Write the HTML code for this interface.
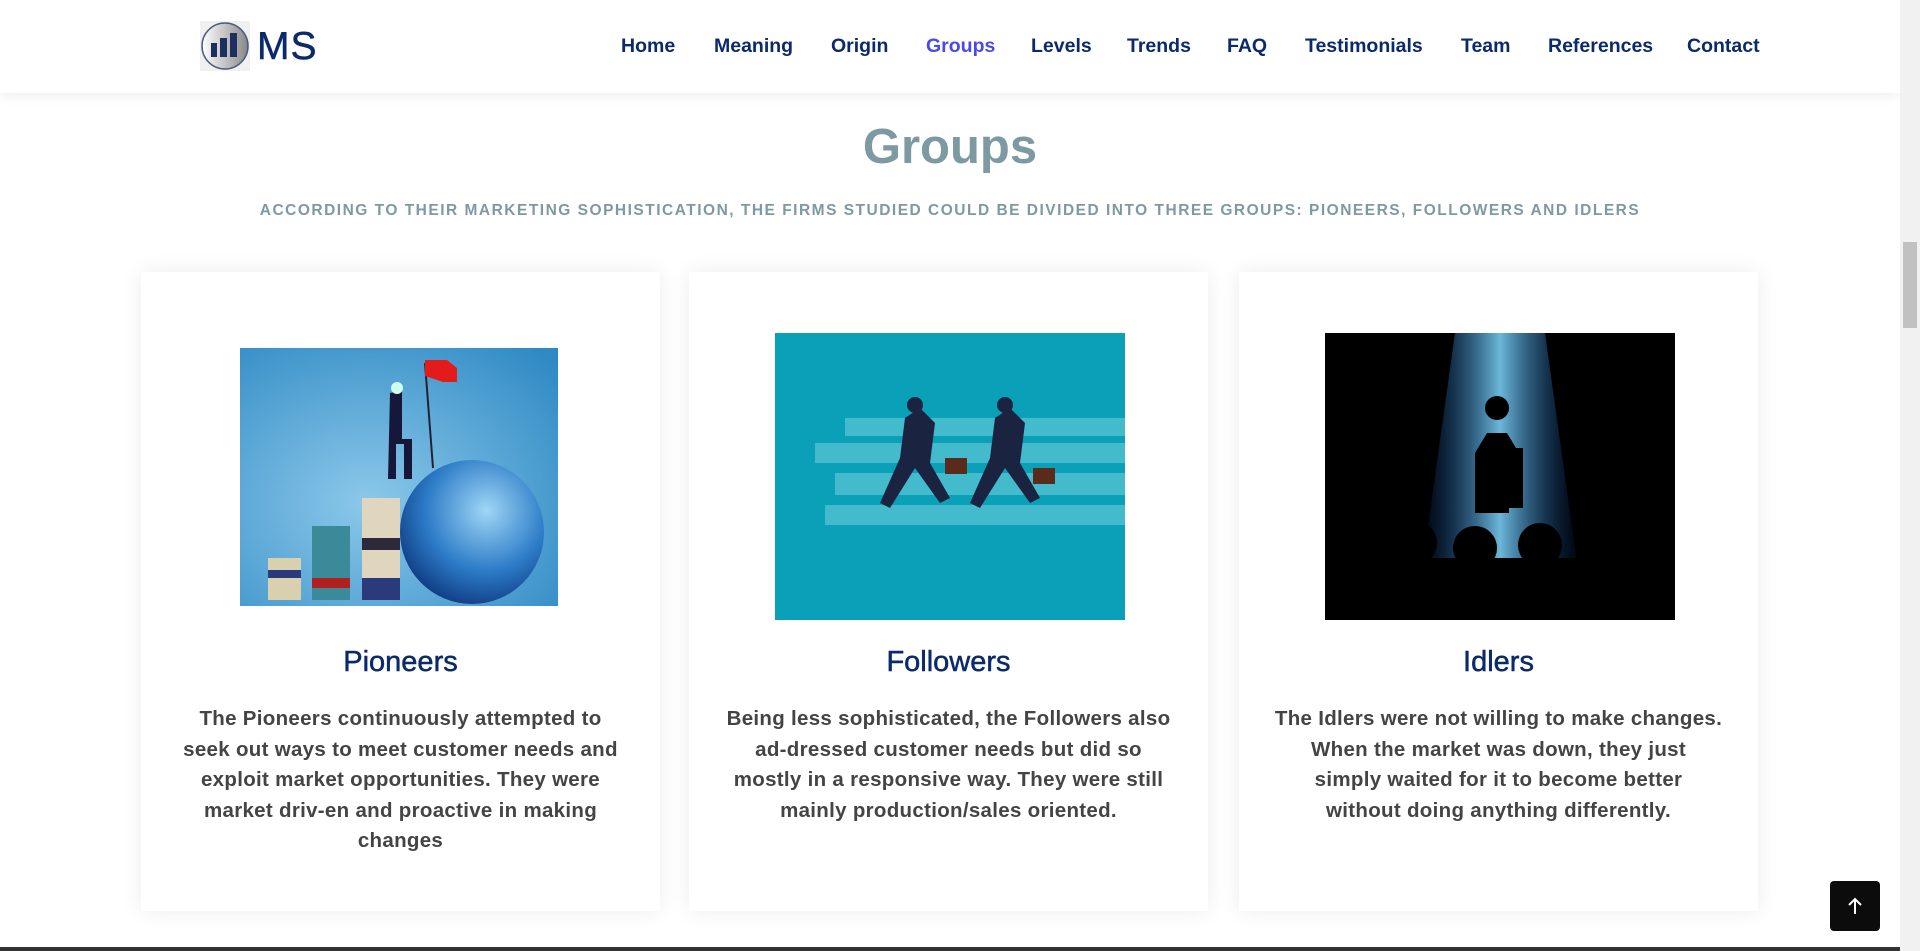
<!DOCTYPE html>
<html><head><meta charset="utf-8">
<style>
*{margin:0;padding:0;box-sizing:border-box}
body{width:1920px;height:951px;overflow:hidden;background:#fff;font-family:"Liberation Sans",sans-serif;position:relative}
.hdr{position:absolute;left:0;top:0;width:1900px;height:93px;background:#fff;box-shadow:0 2px 12px rgba(0,0,0,.08);z-index:2}
.logo{position:absolute;left:200px;top:21px;width:50px;height:50px;background:#f0f0f0}
.ms{position:absolute;left:257px;top:25px;font-size:39px;color:#0b2a6b;letter-spacing:1px;-webkit-text-stroke:.5px #0b2a6b}
.nav{position:absolute;top:35px;font-size:19.5px;color:#0b2a6b;font-weight:bold}
.scroll{position:absolute;right:0;top:0;width:20px;height:951px;background:#f1f1f1;z-index:3}
.thumb{position:absolute;left:3px;top:242px;width:14px;height:86px;background:#c1c1c1}
h1{position:absolute;left:0;width:1900px;top:119px;text-align:center;font-size:49px;color:#7d99a2;font-weight:bold}
.sub{position:absolute;left:0;width:1900px;top:202px;text-align:center;font-size:15.5px;color:#7d99a2;letter-spacing:1.5px;font-weight:bold}
.card{position:absolute;top:272px;width:519px;height:639px;background:#fff;box-shadow:0 0 20px rgba(0,0,0,.08)}
.card svg{position:absolute}
.ct{position:absolute;left:0;width:100%;top:374px;text-align:center;font-size:29px;color:#0b2a6b;-webkit-text-stroke:.5px #0b2a6b}
.cb{position:absolute;left:0;width:100%;top:432px;text-align:center;font-size:20.5px;letter-spacing:.3px;line-height:30.5px;color:#444;font-weight:bold}
.up{position:absolute;left:1830px;top:881px;width:50px;height:50px;background:#0c0c0c;border-radius:4px;z-index:4}
</style></head><body>
<div class="hdr">
 <div class="logo"><svg width="50" height="50"><defs><linearGradient id="lg" x1="0" x2="1"><stop offset="0" stop-color="#fff"/><stop offset="1" stop-color="#888"/></linearGradient></defs><circle cx="25" cy="25" r="23" fill="url(#lg)" stroke="#4a5a80" stroke-width="1.5"/><rect x="11" y="22" width="6" height="14" fill="#1e2e5e"/><rect x="20" y="17" width="7" height="19" fill="#1e2e5e"/><rect x="30" y="12" width="7" height="24" fill="#1e2e5e"/></svg></div>
 <div class="ms">MS</div>
 <span class="nav" style="left:621px">Home</span>
 <span class="nav" style="left:714px">Meaning</span>
 <span class="nav" style="left:831px">Origin</span>
 <span class="nav" style="left:926px;color:#4a4ae8">Groups</span>
 <span class="nav" style="left:1031px">Levels</span>
 <span class="nav" style="left:1127px">Trends</span>
 <span class="nav" style="left:1227px">FAQ</span>
 <span class="nav" style="left:1305px">Testimonials</span>
 <span class="nav" style="left:1461px">Team</span>
 <span class="nav" style="left:1548px">References</span>
 <span class="nav" style="left:1687px">Contact</span>
</div>
<div class="scroll"><div class="thumb"></div></div>
<h1>Groups</h1>
<div class="sub">ACCORDING TO THEIR MARKETING SOPHISTICATION, THE FIRMS STUDIED COULD BE DIVIDED INTO THREE GROUPS: PIONEERS, FOLLOWERS AND IDLERS</div>

<div class="card" style="left:141px">
 <svg style="left:99px;top:76px" width="318" height="258"><defs><radialGradient id="b1" cx=".4" cy=".6" r=".8"><stop offset="0" stop-color="#8cc8ea"/><stop offset="1" stop-color="#2f8ac4"/></radialGradient><radialGradient id="g1" cx=".6" cy=".35" r=".7"><stop offset="0" stop-color="#9fd6f5"/><stop offset=".6" stop-color="#2d7cc8"/><stop offset="1" stop-color="#0f3a80"/></radialGradient></defs><rect width="318" height="258" fill="url(#b1)"/><circle cx="232" cy="184" r="72" fill="url(#g1)"/><rect x="28" y="210" width="33" height="42" fill="#d9d0b0"/><rect x="28" y="222" width="33" height="8" fill="#2a3a7a"/><rect x="72" y="178" width="38" height="74" fill="#3b8a9a"/><rect x="72" y="230" width="38" height="10" fill="#b02020"/><rect x="122" y="150" width="38" height="102" fill="#e0d6c0"/><rect x="122" y="190" width="38" height="12" fill="#2a2a3a"/><rect x="122" y="230" width="38" height="22" fill="#2a3a7a"/><path d="M150 45 l12-2 v48 l10 0 v40 h-8 v-35 h-8 v35 h-8 z" fill="#15183a"/><circle cx="157" cy="40" r="6" fill="#cfe"/><line x1="185" y1="15" x2="193" y2="120" stroke="#223" stroke-width="2"/><path d="M185 12 h22 l10 8 v14 h-14 l-18-6z" fill="#e41b1b"/></svg>
 <div class="ct">Pioneers</div>
 <div class="cb">The Pioneers continuously attempted to<br>seek out ways to meet customer needs and<br>exploit market opportunities. They were<br>market driv-en and proactive in making<br>changes</div>
</div>

<div class="card" style="left:689px">
 <svg style="left:86px;top:61px" width="350" height="287"><rect width="350" height="287" fill="#0aa0b8"/><path d="M40 110 h310 v20 H40z M60 140 h290 v22 H60z M50 172 h300 v20 H50z M70 85 h280 v18 H70z" fill="#5cc4d6" opacity=".7"/><path d="M130 85 l15-10 15 15 -5 40 20 35 -10 5 -25 -35 -25 40 -10 -5 20 -45z" fill="#1a2340"/><path d="M220 85 l15-10 15 15 -5 40 20 35 -10 5 -25 -35 -25 40 -10 -5 20 -45z" fill="#1a2340"/><circle cx="140" cy="72" r="8" fill="#1a2340"/><circle cx="230" cy="72" r="8" fill="#1a2340"/><rect x="170" y="125" width="22" height="16" fill="#5a2a1a"/><rect x="258" y="135" width="22" height="16" fill="#5a2a1a"/></svg>
 <div class="ct">Followers</div>
 <div class="cb">Being less sophisticated, the Followers also<br>ad-dressed customer needs but did so<br>mostly in a responsive way. They were still<br>mainly production/sales oriented.</div>
</div>

<div class="card" style="left:1239px">
 <svg style="left:86px;top:61px" width="350" height="287"><defs><linearGradient id="sp" x1="0" x2="1"><stop offset="0" stop-color="#0040a0" stop-opacity="0"/><stop offset=".5" stop-color="#7fd8ff"/><stop offset="1" stop-color="#0040a0" stop-opacity="0"/></linearGradient></defs><rect width="350" height="287" fill="#000"/><path d="M130 0 h90 l40 287 H90z" fill="url(#sp)" opacity=".85"/><rect x="0" y="230" width="350" height="57" fill="#0a1a80" opacity=".6"/><path d="M150 180 v-60 l12-20 20 0 12 20 -10 0 v60z" fill="#000"/><circle cx="172" cy="75" r="12" fill="#000"/><rect x="158" y="115" width="40" height="60" fill="#000"/><g fill="#000"><circle cx="30" cy="200" r="22"/><circle cx="90" cy="210" r="22"/><circle cx="150" cy="215" r="22"/><circle cx="215" cy="212" r="22"/><circle cx="275" cy="205" r="22"/><circle cx="330" cy="200" r="22"/><rect x="0" y="225" width="350" height="62"/></g></svg>
 <div class="ct">Idlers</div>
 <div class="cb">The Idlers were not willing to make changes.<br>When the market was down, they just<br>simply waited for it to become better<br>without doing anything differently.</div>
</div>

<div class="up"><svg width="50" height="50"><path d="M25 33 V18 M19 24 L25 18 L31 24" stroke="#fff" stroke-width="2" fill="none"/></svg></div>
<div style="position:absolute;left:0;top:947px;width:1900px;height:4px;background:#333"></div>
</body></html>
